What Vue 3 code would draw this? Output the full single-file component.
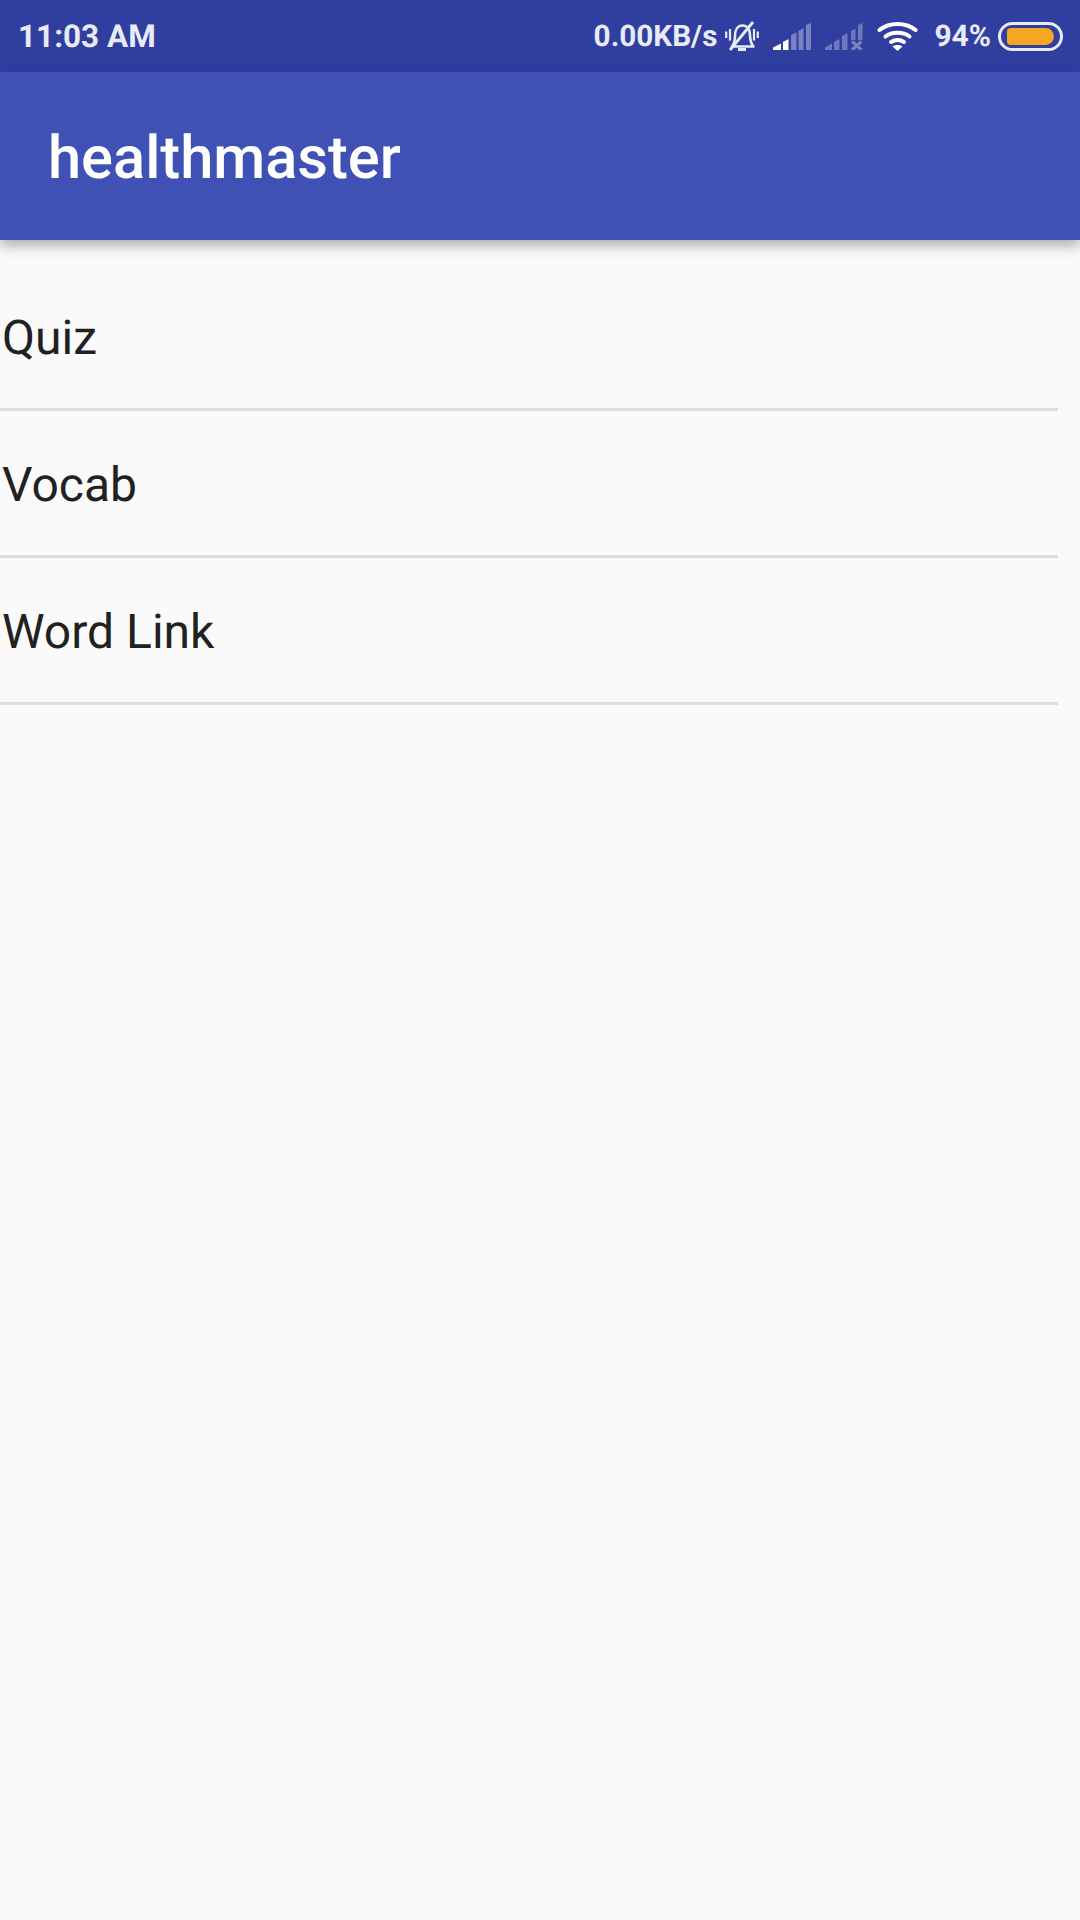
<script setup>
const items = ['Quiz', 'Vocab', 'Word Link']
</script>

<template>
  <div class="screen">
    <div class="status-bar">
      <span class="time">11:03 AM</span>
      <div class="status-right">
        <span class="speed">0.00KB/s</span>
        <svg class="bell" width="34" height="31" viewBox="0 0 34 31" fill="none" stroke="#e8eaf6">
          <path d="M7 25.500C9.500 22.500 10 19.500 10 14.500C10 8.500 13 4.500 17.500 4.500C22.500 4.500 25 8.500 25 14C25 19.500 26 22.500 28.500 25.500z" stroke-width="2.600" stroke-linejoin="round" />
          <path d="M13 28.500H21" stroke-width="3" />
          <path d="M5 29L28 1" stroke-width="2.800" />
          <path d="M1.200 10.500V17M5 8V19.500M29 8V19.500M32.800 10.500V17" stroke-width="2.200" />
        </svg>
        <svg class="signal" width="38" height="27" viewBox="0 0 38 27">
          <path d="M0 27V24.500L8 20.500V27z" fill="#fff" />
          <path d="M10 27V19L15.500 16V27z" fill="#fff" />
          <path d="M18 27V12L23.500 9.500V27z" fill="#fff" fill-opacity="0.35" />
          <path d="M25.500 27V8L30.500 5V27z" fill="#fff" fill-opacity="0.35" />
          <path d="M33 27V2L38 0V27z" fill="#fff" fill-opacity="0.35" />
        </svg>
        <svg class="signal sim2" width="38" height="27" viewBox="0 0 38 27">
          <path d="M0 27V24.500L7 20.500V27z" fill="#fff" fill-opacity="0.3" />
          <path d="M9 27V19L14.500 16V27z" fill="#fff" fill-opacity="0.3" />
          <path d="M17 27V13L22.500 10V27z" fill="#fff" fill-opacity="0.3" />
          <path d="M26 17V8L30.500 5.500V17z" fill="#fff" fill-opacity="0.3" />
          <path d="M33 17V2L37.500 0V17z" fill="#fff" fill-opacity="0.3" />
          <path d="M27 18.500L36.500 27M36.500 18.500L27 27" stroke="#fff" stroke-opacity="0.35" stroke-width="3.200" />
        </svg>
        <svg class="wifi" width="41" height="29" viewBox="0 0 41 29" fill="none" stroke="#fff" stroke-width="4" stroke-linecap="round">
          <path d="M2.500 8C12.500 0 28.500 0 38.500 8" />
          <path d="M8.500 14.500C15 9.500 26 9.500 32.500 14.500" />
          <path d="M14 20C18 17.500 23 17.500 27 20" />
          <path d="M20.500 29L15.500 24.500C18 22.500 23 22.500 25.500 24.500z" fill="#fff" stroke="none" />
        </svg>
        <span class="level">94%</span>
        <div class="battery">
          <div class="battery-fill"></div>
        </div>
      </div>
    </div>
    <header class="app-bar">
      <span class="title">healthmaster</span>
    </header>
    <main class="list">
      <div v-for="item in items" :key="item" class="row">{{ item }}</div>
    </main>
  </div>
</template>

<style scoped>
.screen {
  display: flex;
  flex-direction: column;
  height: 1920px;
  background: #fafafa;
  font-family: Roboto, sans-serif;
  text-rendering: geometricPrecision;
  overflow: hidden;
}

.status-bar {
  display: flex;
  align-items: center;
  justify-content: space-between;
  height: 72px;
  padding: 0 17px 0 18px;
  box-sizing: border-box;
  background: #303f9f;
  color: #e8eaf6;
}

.time {
  font-size: 31.500px;
  font-weight: 700;
}

.status-right {
  display: flex;
  align-items: center;
}

.speed {
  font-size: 29.700px;
  font-weight: 700;
}

.bell {
  flex: none;
  margin-left: 8px;
}

.signal {
  flex: none;
  margin-left: 14px;
}

.wifi {
  flex: none;
  margin-left: 14px;
}

.level {
  margin-left: 16px;
  font-size: 30px;
  font-weight: 700;
}

.battery {
  display: flex;
  align-items: center;
  width: 65px;
  height: 29px;
  margin-left: 7px;
  padding: 0 6px;
  box-sizing: border-box;
  border: 3px solid #e8eaf6;
  border-radius: 15px;
}

.battery-fill {
  width: 100%;
  height: 17px;
  background: #f5a623;
  border-radius: 4px 9px 9px 4px;
}

.app-bar {
  display: flex;
  align-items: center;
  height: 168px;
  padding: 4px 0 0 48px;
  box-sizing: border-box;
  background: #3f51b5;
  box-shadow: 0 6px 12px rgba(0, 0, 0, 0.3);
  z-index: 1;
}

.title {
  color: #fff;
  font-size: 59.600px;
  font-weight: 500;
}

.list {
  width: 1058px;
  padding-top: 24px;
}

.row {
  display: flex;
  align-items: center;
  height: 142px;
  padding: 2px 0 0 2px;
  border-bottom: 3px solid #dcdcdc;
  color: #212121;
  font-size: 48px;
}
</style>

<style>
html, body {
  margin: 0;
  background: #fafafa;
}
</style>
